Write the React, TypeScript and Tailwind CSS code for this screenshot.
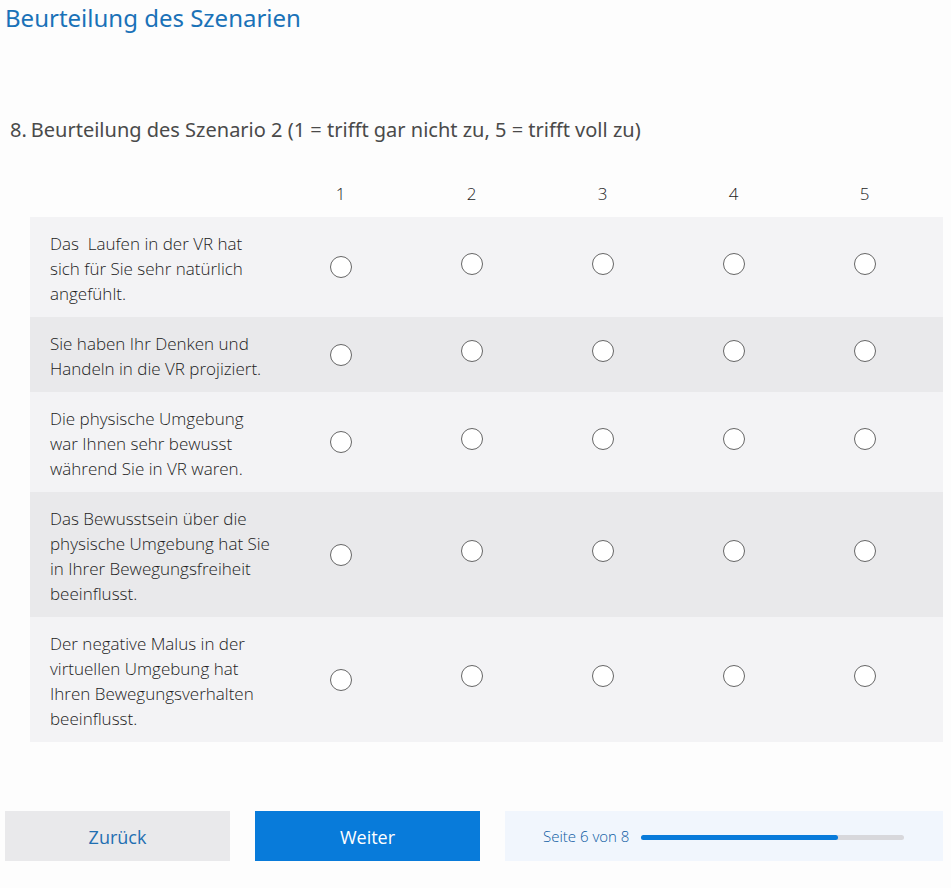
const scale = [1, 2, 3, 4, 5];

const statements = [
  'Das\u00a0 Laufen in der VR hat\nsich für Sie sehr natürlich\nangefühlt.',
  'Sie haben Ihr Denken und\nHandeln in die VR projiziert.',
  'Die physische Umgebung\nwar Ihnen sehr bewusst\nwährend Sie in VR waren.',
  'Das Bewusstsein über die\nphysische Umgebung hat Sie\nin Ihrer Bewegungsfreiheit\nbeeinflusst.',
  'Der negative Malus in der\nvirtuellen Umgebung hat\nIhren Bewegungsverhalten\nbeeinflusst.',
];

function cellPadding(value: number) {
  if (value === 1) return '';
  if (value === 5) return 'pb-[7px] pr-[13px]';
  return 'pb-[7px]';
}

function RatingTable() {
  return (
    <table aria-labelledby="question" className="w-full table-fixed border-collapse text-[17px] leading-[25px] font-light text-[#1c1c1c]">
      <colgroup>
        <col className="w-[245px]" />
        <col />
        <col />
        <col />
        <col />
        <col className="w-[144px]" />
      </colgroup>
      <thead>
        <tr>
          <td />
          {scale.map((value) => (
            <th
              key={value}
              id={`col-${value}`}
              scope="col"
              className={`pb-[11px] font-light ${value === 5 ? 'pr-[13px]' : ''}`}
            >
              {value}
            </th>
          ))}
        </tr>
      </thead>
      <tbody>
        {statements.map((statement, row) => (
          <tr key={statement} className="odd:bg-[#f3f3f5] even:bg-[#e9e9eb]">
            <th id={`row-${row}`} scope="row" className="pt-[14px] pb-[11px] pl-5 text-left font-light whitespace-pre-line">
              {statement}
            </th>
            {scale.map((value) => (
              <td key={value} className={`text-center align-middle ${cellPadding(value)}`}>
                <input
                  type="radio"
                  name={`statement-${row}`}
                  value={value}
                  aria-labelledby={`row-${row} col-${value}`}
                  className="mx-auto block size-[22px] appearance-none rounded-full border border-[#666] bg-white checked:border-[6px] checked:border-[#0a7adb]"
                />
              </td>
            ))}
          </tr>
        ))}
      </tbody>
    </table>
  );
}

export default function App() {
  return (
    <main className="min-h-screen bg-[#fdfdfd] pr-2 pb-6 pl-[5px] font-['Open_Sans','Noto_Sans',sans-serif]">
      <h1 className="pt-[2px] font-['Noto_Sans',sans-serif] text-2xl leading-8 text-[#1a72b8]">Beurteilung des Szenarien</h1>
      <form onSubmit={(event) => event.preventDefault()}>
        <h2 id="question" className="flex gap-1 pt-[82px] pl-[5px] font-['Noto_Sans',sans-serif] text-xl leading-7 text-[#4a4a4a]">
          <span>8.</span>
          <span>Beurteilung des Szenario 2 (1 = trifft gar nicht zu, 5 = trifft voll zu)</span>
        </h2>
        <div className="pt-[37px] pl-[25px]">
          <RatingTable />
        </div>
        <div className="mt-[69px] flex gap-[25px]">
          <button type="button" className="h-[50px] w-[225px] bg-[#e9e9eb] pt-[2px] text-lg text-[#1f6fb2]">
            Zurück
          </button>
          <button type="submit" className="h-[50px] w-[225px] bg-[#087bda] pt-[2px] text-lg text-white">
            Weiter
          </button>
          <div className="flex h-[50px] flex-1 items-center gap-3 bg-[#f1f6fd] pr-[39px] pl-[38px]">
            <span id="page" className="text-[15px] font-light text-[#0d5ca3]">Seite 6 von 8</span>
            <div
              role="progressbar"
              aria-labelledby="page"
              aria-valuenow={6}
              aria-valuemax={8}
              className="mt-[3px] h-[5px] flex-1 rounded-full bg-[#d8d8dc]"
            >
              <div className="h-full w-3/4 rounded-full bg-[#087bda]" />
            </div>
          </div>
        </div>
      </form>
    </main>
  );
}
